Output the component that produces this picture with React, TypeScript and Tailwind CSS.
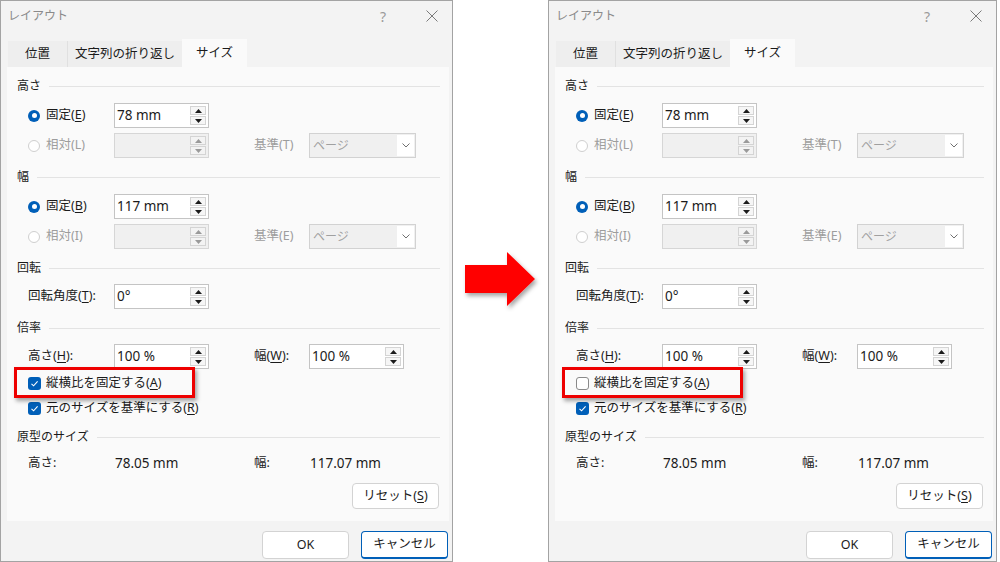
import React from 'react';

const FONT = "font-['Noto_Sans','Noto_Sans_CJK_JP',sans-serif]";

function U({ children }: { children: React.ReactNode }) {
  return <span className="underline underline-offset-2">{children}</span>;
}

function Section({ title }: { title: string }) {
  return (
    <div className="flex items-center h-4 pl-[10px] pr-[9px] gap-2">
      <span className="text-[12px] text-[#1b1b1b] leading-none">{title}</span>
      <div className="flex-1 h-px bg-[#e3e3e3]" />
    </div>
  );
}

function Radio({ on, disabled }: { on?: boolean; disabled?: boolean }) {
  if (on) {
    return (
      <span className="w-[12px] h-[12px] rounded-full bg-[#005fb8] flex items-center justify-center shrink-0">
        <span className="w-[5px] h-[5px] rounded-full bg-white" />
      </span>
    );
  }
  return <span className={`w-[12px] h-[12px] rounded-full border shrink-0 bg-white ${disabled ? 'border-[#cfcfcf]' : 'border-[#8a8a8a]'}`} />;
}

function Check({ on }: { on: boolean }) {
  if (on) {
    return (
      <span className="w-[13px] h-[13px] rounded-[3px] bg-[#005fb8] flex items-center justify-center shrink-0">
        <svg width="9" height="9" viewBox="0 0 9 9">
          <path d="M1.5 4.8 L3.6 6.8 L7.6 2.4" fill="none" stroke="white" strokeWidth="1.1" />
        </svg>
      </span>
    );
  }
  return <span className="w-[13px] h-[13px] rounded-[3px] border border-[#8a8a8a] bg-white shrink-0" />;
}

function Arrow({ up, disabled }: { up?: boolean; disabled?: boolean }) {
  const c = disabled ? '#9a9a9a' : '#1b1b1b';
  return (
    <span className={`flex-1 flex items-center justify-center border border-[#d4d4d4] ${disabled ? 'bg-[#f3f3f3]' : 'bg-[#f6f6f6]'}`}>
      <svg width="7" height="4" viewBox="0 0 7 4">
        {up ? <path d="M0 4 L3.5 0 L7 4 Z" fill={c} /> : <path d="M0 0 L3.5 4 L7 0 Z" fill={c} />}
      </svg>
    </span>
  );
}

function Spin({ value, disabled }: { value?: string; disabled?: boolean }) {
  return (
    <div className={`w-[95px] h-[25px] flex border ${disabled ? 'bg-[#f0f0f0] border-[#d6d6d6]' : 'bg-white border-[#c4c4c4]'}`}>
      <div className="flex-1 flex items-center pl-[2px] text-[13.5px] text-[#1b1b1b]">{value}</div>
      <div className="w-[18px] flex flex-col gap-px py-[2px] pr-[2px]">
        <Arrow up disabled={disabled} />
        <Arrow disabled={disabled} />
      </div>
    </div>
  );
}

function Select() {
  return (
    <div className="w-[107px] h-[25px] flex border border-[#d2d2d2] bg-[#f0f0f0]">
      <div className="flex-1 flex items-center pl-[3px] text-[12px] text-[#a0a0a0]">ページ</div>
      <div className="w-[17px] my-[1px] mr-[1px] bg-white flex items-center justify-center">
        <svg width="8" height="5" viewBox="0 0 8 5">
          <path d="M0.5 0.5 L4 4 L7.5 0.5" fill="none" stroke="#606060" strokeWidth="0.9" />
        </svg>
      </div>
    </div>
  );
}

function SizeRows({ fixedKey, value, relKey, baseKey }: { fixedKey: string; value: string; relKey: string; baseKey: string }) {
  return (
    <>
      <div className="flex items-center h-[25px] pl-[21px] mt-[9px]">
        <div className="w-[86px] flex items-center gap-[6px]">
          <Radio on />
          <span className="text-[12.5px] text-[#1b1b1b]">固定(<U>{fixedKey}</U>)</span>
        </div>
        <Spin value={value} />
      </div>
      <div className="flex items-center h-[25px] pl-[21px] mt-[5px]">
        <div className="w-[86px] flex items-center gap-[6px]">
          <Radio disabled />
          <span className="text-[12.5px] text-[#9d9d9d]">相対({relKey})</span>
        </div>
        <Spin disabled />
        <div className="w-[45px]" />
        <div className="w-[55px] text-[12.5px] text-[#9d9d9d]">基準({baseKey})</div>
        <Select />
      </div>
    </>
  );
}

function Dialog({ locked, className }: { locked: boolean; className: string }) {
  return (
    <div className={`relative flex flex-col bg-[#f3f3f3] border border-[#a3a3a3] ${className}`}>
      <div className="h-[30px] flex items-center pl-[7px] text-[12px] text-[#8a8a8a]">
        <span>レイアウト</span>
        <span className="ml-auto mr-[40px] text-[14px] text-[#9a9a9a]">?</span>
        <svg width="12" height="12" viewBox="0 0 12 12" className="mr-[14px]">
          <path d="M0.5 0.5 L11.5 11.5 M11.5 0.5 L0.5 11.5" stroke="#7a7a7a" strokeWidth="1" />
        </svg>
      </div>
      <div className="mt-[8px] h-[28px] flex items-end pl-[7px] text-[12.5px] text-[#1b1b1b]">
        <div className="w-[60px] h-[26px] flex items-center justify-center bg-[#eeeeee] border-r border-[#e0e0e0]">位置</div>
        <div className="w-[114px] h-[26px] flex items-center justify-center bg-[#eeeeee]">文字列の折り返し</div>
        <div className="w-[65px] h-[28px] flex items-center justify-center bg-[#fafafa]">サイズ</div>
      </div>
      <div className="ml-[6px] mr-[3px] h-[454px] bg-[#fafafa] pt-[11px] flex flex-col">
        <Section title="高さ" />
        <SizeRows fixedKey="E" value="78 mm" relKey="L" baseKey="T" />
        <div className="mt-[11px]"><Section title="幅" /></div>
        <SizeRows fixedKey="B" value="117 mm" relKey="I" baseKey="E" />
        <div className="mt-[11px]"><Section title="回転" /></div>
        <div className="flex items-center h-[25px] pl-[21px] mt-[8px]">
          <div className="w-[86px] text-[12.5px] text-[#1b1b1b]">回転角度(<U>T</U>):</div>
          <Spin value="0°" />
        </div>
        <div className="mt-[11px]"><Section title="倍率" /></div>
        <div className="flex items-center h-[25px] pl-[21px] mt-[8px]">
          <div className="w-[86px] text-[12.5px] text-[#1b1b1b]">高さ(<U>H</U>):</div>
          <Spin value="100 %" />
          <div className="w-[45px]" />
          <div className="w-[55px] text-[12.5px] text-[#1b1b1b]">幅(<U>W</U>):</div>
          <Spin value="100 %" />
        </div>
        <div className="flex items-center h-[20px] pl-[21px] mt-[4px] gap-[5px]">
          <Check on={locked} />
          <span className="text-[12.5px] text-[#1b1b1b]">縦横比を固定する(<U>A</U>)</span>
        </div>
        <div className="flex items-center h-[20px] pl-[21px] mt-[5px] gap-[5px]">
          <Check on />
          <span className="text-[12.5px] text-[#1b1b1b]">元のサイズを基準にする(<U>R</U>)</span>
        </div>
        <div className="mt-[11px]"><Section title="原型のサイズ" /></div>
        <div className="flex items-center h-[20px] pl-[21px] mt-[8px] text-[#1b1b1b]">
          <div className="w-[87px] text-[12.5px]">高さ:</div>
          <div className="w-[139px] text-[13.5px]">78.05 mm</div>
          <div className="w-[56px] text-[12.5px]">幅:</div>
          <div className="text-[13.5px]">117.07 mm</div>
        </div>
        <div className="flex justify-end pr-[10px] mt-[10px]">
          <div className="w-[87px] h-[26px] flex items-center justify-center bg-white border border-[#d3d3d3] rounded-[4px] text-[12.5px] text-[#1b1b1b]">
            リセット(<U>S</U>)
          </div>
        </div>
      </div>
      <div className="flex justify-end gap-[12px] pr-[4px] mt-[10px]">
        <div className="w-[87px] h-[28px] flex items-center justify-center bg-white border border-[#d3d3d3] rounded-[4px] text-[12.5px] text-[#1b1b1b]">OK</div>
        <div className="w-[87px] h-[28px] flex items-center justify-center bg-white border border-[#005fb8] border-b-2 rounded-[4px] text-[12.5px] text-[#1b1b1b]">キャンセル</div>
      </div>
      <div className="absolute left-[13px] top-[366px] w-[181px] h-[31px] border-[3px] border-[#ee0000] shadow-[2px_3px_4px_rgba(0,0,0,0.35)]" />
    </div>
  );
}

export default function App() {
  return (
    <div className={`w-[1000px] h-[562px] bg-white flex overflow-hidden ${FONT}`}>
      <Dialog locked className="w-[453px] h-[562px]" />
      <div className="w-[95px] flex items-center justify-center">
        <svg width="80" height="62" viewBox="0 0 80 62">
          <defs>
            <filter id="sh" x="-20%" y="-20%" width="150%" height="150%">
              <feDropShadow dx="2" dy="3" stdDeviation="2" floodColor="#000" floodOpacity="0.35" />
            </filter>
          </defs>
          <path d="M4 15 L46 15 L46 2 L74 29 L46 56 L46 43 L4 43 Z" fill="#ff0000" filter="url(#sh)" />
        </svg>
      </div>
      <Dialog locked={false} className="w-[449px] h-[562px]" />
    </div>
  );
}
